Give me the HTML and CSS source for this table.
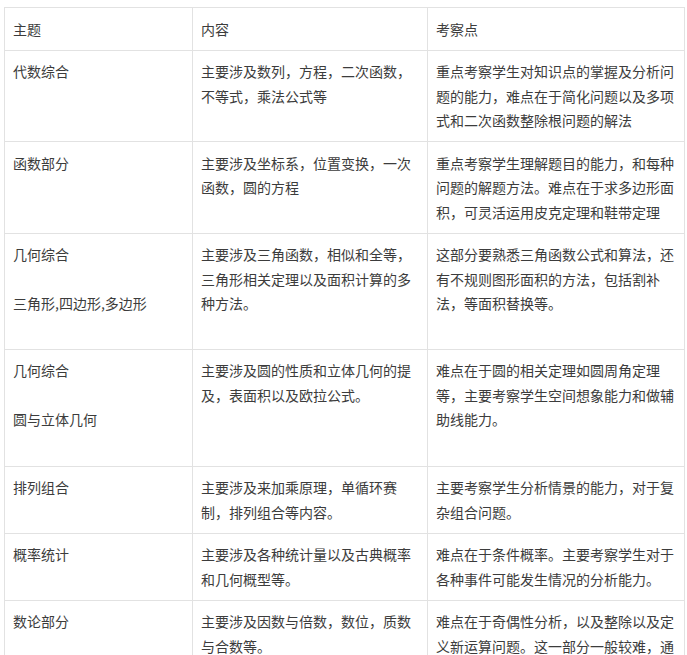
FILE: index.html
```html
<!DOCTYPE html>
<html lang="zh-CN">
<head>
<meta charset="utf-8">
<title>考点表</title>
<link rel="stylesheet" href="styles.css">
</head>
<body>
<div class="page">
<table class="topics">
  <colgroup>
    <col class="c1">
    <col class="c2">
    <col class="c3">
  </colgroup>
  <thead>
    <tr><th>主题</th><th>内容</th><th>考察点</th></tr>
  </thead>
  <tbody>
    <tr>
      <td>代数综合</td>
      <td>主要涉及数列，方程，二次函数，<br>不等式，乘法公式等</td>
      <td>重点考察学生对知识点的掌握及分析问<br>题的能力，难点在于简化问题以及多项<br>式和二次函数整除根问题的解法</td>
    </tr>
    <tr>
      <td>函数部分</td>
      <td>主要涉及坐标系，位置变换，一次<br>函数，圆的方程</td>
      <td>重点考察学生理解题目的能力，和每种<br>问题的解题方法。难点在于求多边形面<br>积，可灵活运用皮克定理和鞋带定理</td>
    </tr>
    <tr>
      <td>几何综合<br>&nbsp;<br>三角形,四边形,多边形<br>&nbsp;</td>
      <td>主要涉及三角函数，相似和全等，<br>三角形相关定理以及面积计算的多<br>种方法。</td>
      <td>这部分要熟悉三角函数公式和算法，还<br>有不规则图形面积的方法，包括割补<br>法，等面积替换等。</td>
    </tr>
    <tr>
      <td>几何综合<br>&nbsp;<br>圆与立体几何<br>&nbsp;</td>
      <td>主要涉及圆的性质和立体几何的提<br>及，表面积以及欧拉公式。</td>
      <td>难点在于圆的相关定理如圆周角定理<br>等，主要考察学生空间想象能力和做辅<br>助线能力。</td>
    </tr>
    <tr>
      <td>排列组合</td>
      <td>主要涉及来加乘原理，单循环赛<br>制，排列组合等内容。</td>
      <td>主要考察学生分析情景的能力，对于复<br>杂组合问题。</td>
    </tr>
    <tr>
      <td>概率统计</td>
      <td>主要涉及各种统计量以及古典概率<br>和几何概型等。</td>
      <td>难点在于条件概率。主要考察学生对于<br>各种事件可能发生情况的分析能力。</td>
    </tr>
    <tr>
      <td>数论部分</td>
      <td>主要涉及因数与倍数，数位，质数<br>与合数等。</td>
      <td>难点在于奇偶性分析，以及整除以及定<br>义新运算问题。这一部分一般较难，通</td>
    </tr>
  </tbody>
</table>
</div>
</body>
</html>
```

FILE: styles.css
```css
html, body {
  margin: 0;
  padding: 0;
  background: #ffffff;
}

.page {
  padding: 7px 0 0 4px;
}

.topics {
  border-collapse: collapse;
  table-layout: fixed;
  width: 680px;
  font-family: "Noto Sans CJK SC", "Noto Sans", sans-serif;
  font-size: 14px;
  line-height: 24.5px;
  color: #3c3c3c;
}

.topics .c1 { width: 188px; }
.topics .c2 { width: 235px; }
.topics .c3 { width: 257px; }

.topics th,
.topics td {
  border: 1px solid #e2e2e2;
  padding: 8.5px 8px;
  text-align: left;
  vertical-align: top;
  font-weight: normal;
  white-space: nowrap;
  overflow: hidden;
}

.topics tbody tr:nth-child(4) td {
  padding-bottom: 9.5px;
}
```
